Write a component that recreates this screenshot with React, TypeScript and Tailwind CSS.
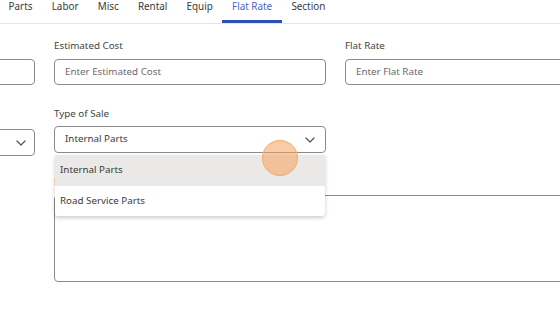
import React from "react";

const Chevron = () => (
  <svg width="10" height="6" viewBox="0 0 10 6" fill="none" stroke="#555" strokeWidth="1.2" strokeLinecap="round" strokeLinejoin="round">
    <path d="M1 1l4 4 4-4" />
  </svg>
);

export default function App() {
  const tabs = ["Parts", "Labor", "Misc", "Rental", "Equip", "Flat Rate", "Section"];
  return (
    <div className="w-[560px] h-[315px] overflow-hidden bg-white text-[#3c3c3c]" style={{ fontFamily: '"Noto Sans", "Open Sans", sans-serif' }}>
      <div className="flex h-[24px] border-b border-[#e6e6e6] ml-[-1px]">
        {tabs.map((t) => (
          <div
            key={t}
            className={
              "px-[9.6px] h-[30px] mt-[-7px] flex items-start pt-[5px] text-[9.9px] leading-[16px] " +
              (t === "Flat Rate" ? "text-[#4a67c0] border-b-[3px] border-[#2e4fb3]" : "text-[#3a3a3a]")
            }
          >
            {t}
          </div>
        ))}
      </div>

      <div className="flex gap-[19px] ml-[-237px] mt-[15px]">
        {/* left column */}
        <div className="w-[272px] shrink-0 flex flex-col">
          <div className="h-[20px]" />
          <div className="h-[26px] border border-[#8a8a8a] rounded-[4px]" />
          <div className="h-[44px]" />
          <div className="h-[27px] border border-[#8a8a8a] rounded-[4px] flex items-center justify-end pr-[8px]">
            <Chevron />
          </div>
        </div>

        {/* middle column */}
        <div className="w-[272px] shrink-0 flex flex-col relative">
          <div className="h-[20px] text-[9.8px] leading-[14px] text-[#444]">Estimated Cost</div>
          <div className="h-[26px] border border-[#8a8a8a] rounded-[4px] flex items-center px-[10px] text-[9.8px] text-[#6a6a6a]">
            Enter Estimated Cost
          </div>
          <div className="h-[22px]" />
          <div className="h-[13px] text-[9.8px] leading-[13px] text-[#444]">Type of Sale</div>
          <div className="h-[6px]" />
          <div className="relative">
            <div className="h-[27px] border border-[#8a8a8a] rounded-[4px] flex items-center justify-between px-[10px] text-[9.8px] text-[#3a3a3a]">
              <span>Internal Parts</span>
              <Chevron />
            </div>
            <div className="absolute left-[1px] top-[29px] w-[270px] bg-white rounded-b-[3px] shadow-[0_2px_4px_rgba(0,0,0,0.2)] z-20 text-[9.8px] text-[#3a3a3a]">
              <div className="h-[31px] bg-[#ebe9e7] flex items-center px-[5px]">Internal Parts</div>
              <div className="h-[30px] flex items-center px-[5px]">Road Service Parts</div>
            </div>
            <div className="absolute left-[208px] top-[14px] w-[36px] h-[36px] rounded-full bg-[rgba(245,160,95,0.55)] border border-[#f5a860] z-30" />
          </div>
          <div className="h-[20px] mt-[22px] text-[9.8px] leading-[14px] text-[#444]">Description</div>
          <div className="h-[87px] w-[600px] border border-[#8a8a8a] rounded-[4px]" />
        </div>

        {/* right column */}
        <div className="w-[272px] shrink-0 flex flex-col">
          <div className="h-[20px] text-[9.8px] leading-[14px] text-[#444]">Flat Rate</div>
          <div className="h-[26px] border border-[#8a8a8a] rounded-[4px] flex items-center px-[10px] text-[9.8px] text-[#6a6a6a]">
            Enter Flat Rate
          </div>
        </div>
      </div>
    </div>
  );
}
